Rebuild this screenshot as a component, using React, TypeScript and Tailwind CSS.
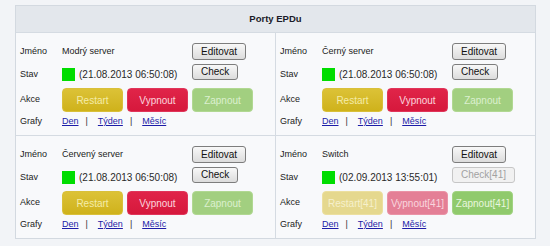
import React from "react";

type Port = {
	name: string;
	date: string;
	disabled?: boolean;
};

const ports: Port[] = [
	{ name: "Modrý server", date: "(21.08.2013 06:50:08)" },
	{ name: "Černý server", date: "(21.08.2013 06:50:08)" },
	{ name: "Červený server", date: "(21.08.2013 06:50:08)" },
	{ name: "Switch", date: "(02.09.2013 13:55:01)", disabled: true },
];

const grayBtn =
	"h-full px-[8px] rounded-[3px] border text-[10px] leading-none whitespace-nowrap";

const PortCell = ({ port, right, bottom }: { port: Port; right?: boolean; bottom?: boolean }) => {
	const d = port.disabled;
	return (
		<div
			className={
				"flex flex-col pt-[10px] pl-[4px] pb-[3px] " +
				(right ? "" : "border-r border-[#d5dbe2] ") +
				(bottom ? "" : "border-b border-[#d5dbe2]")
			}
		>
			{/* jmeno */}
			<div className="flex h-[17px] items-center">
				<div className="w-[42px]">Jméno</div>
				<div className="w-[130px]">{port.name}</div>
				<button className={grayBtn + " border-[#7d7d7d] bg-linear-to-b from-[#f8f8f8] to-[#dcdcdc] text-[#111]"}>
					Editovat
				</button>
			</div>

			{/* stav */}
			<div className="flex h-[16px] mt-[4px] items-center">
				<div className="w-[42px] pt-[5px]">Stav</div>
				<div className="w-[130px] flex items-center pt-[4px]">
					<span className="w-[13px] h-[13px] bg-[#00dd00] shrink-0"></span>
					<span className="ml-[4px] text-[10px] text-[#2a2a2a]">{port.date}</span>
				</div>
				{d ? (
					<button className={grayBtn + " border-[#c6c6c6] bg-[#f1f1f1] text-[#a2a2a2]"}>Check[41]</button>
				) : (
					<button className={grayBtn + " border-[#7d7d7d] bg-linear-to-b from-[#f8f8f8] to-[#dcdcdc] text-[#111]"}>
						Check
					</button>
				)}
			</div>

			{/* akce */}
			<div className="flex h-[24px] mt-[8px] items-center">
				<div className="w-[42px]">Akce</div>
				<div className="flex gap-[4px] h-full text-[10px]">
					<button
						className={
							"w-[61px] h-full rounded-[4px] border whitespace-nowrap " +
							(d
								? "bg-[#e5d88e] border-[#ecdf9f] text-[#f6f0cc]"
								: "bg-linear-to-b from-[#dcc236] to-[#cfb21a] border-[#d9c03a] text-[#f4eca8]")
						}
					>
						{d ? "Restart[41]" : "Restart"}
					</button>
					<button
						className={
							"w-[61px] h-full rounded-[4px] border whitespace-nowrap " +
							(d
								? "bg-[#e47f96] border-[#ea93a6] text-[#f9d6de]"
								: "bg-linear-to-b from-[#e02449] to-[#d6183c] border-[#e0355a] text-[#fbd6de]")
						}
					>
						{d ? "Vypnout[41]" : "Vypnout"}
					</button>
					<button
						className={
							"w-[61px] h-full rounded-[4px] border whitespace-nowrap " +
							(d
								? "bg-[#90ca6c] border-[#a2d382] text-[#e8f6de]"
								: "bg-[#a2cf80] border-[#b1d892] text-[#dcefcf]")
						}
					>
						{d ? "Zapnout[41]" : "Zapnout"}
					</button>
				</div>
			</div>

			{/* grafy */}
			<div className="flex h-[20px] items-center">
				<div className="w-[42px]">Grafy</div>
				<div className="flex items-center text-[#333]">
					<a className="text-[#1c1ca8] underline">Den</a>
					<span className="ml-[7px]">|</span>
					<a className="ml-[10px] text-[#1c1ca8] underline">Týden</a>
					<span className="ml-[7px]">|</span>
					<a className="ml-[10px] text-[#1c1ca8] underline">Měsíc</a>
				</div>
			</div>
		</div>
	);
};

export default function App() {
	return (
		<div
			className="w-[550px] h-[246px] bg-[#f2f4f7] pt-[5px] pl-[15px] text-[9px] text-[#222]"
			style={{ fontFamily: '"Liberation Sans", Arial, sans-serif' }}
		>
			<div className="w-[521px] border border-[#d3d9e0] bg-[#f8f9fb]">
				<div className="h-[27px] bg-[#e3e7ec] border-b border-[#d5dbe2] flex items-center justify-center font-bold text-[9.5px] text-[#1b1b28]">
					Porty EPDu
				</div>
				<div className="grid grid-cols-[260px_1fr]">
					<PortCell port={ports[0]} />
					<PortCell port={ports[1]} right />
					<PortCell port={ports[2]} bottom />
					<PortCell port={ports[3]} right bottom />
				</div>
			</div>
		</div>
	);
}
